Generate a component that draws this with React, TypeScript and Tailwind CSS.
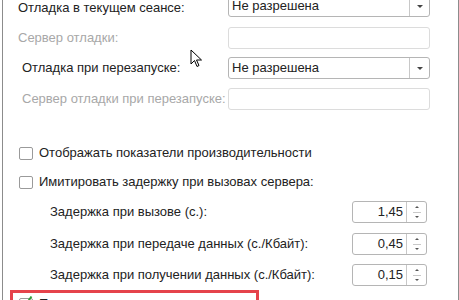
import React from "react";

const FONT = { fontFamily: '"Liberation Sans", Arial, sans-serif' };

function Combo({ value }: { value: string }) {
  return (
    <div className="flex h-[22px] w-[202px] rounded-[3px] border border-[#b5b5b5] bg-white">
      <div className="flex flex-1 items-center pl-[3px] text-[13px] text-[#222]">{value}</div>
      <div className="flex w-[20px] items-center justify-center border-l border-[#c8c8c8]">
        <div className="h-0 w-0 border-x-[3px] border-t-[3px] border-x-transparent border-t-[#444]" />
      </div>
    </div>
  );
}

function Field() {
  return <div className="h-[22px] w-[202px] rounded-[3px] border border-[#dcdcdc] bg-white" />;
}

function Spinner({ value }: { value: string }) {
  return (
    <div className="flex h-[22px] w-[75px] rounded-[3px] border border-[#b5b5b5] bg-white">
      <div className="flex flex-1 items-center justify-end pr-[3px] text-[13px] text-[#222]">{value}</div>
      <div className="flex w-[20px] flex-col items-center justify-center border-l border-[#c8c8c8]">
        <div className="flex flex-1 items-center">
          <div className="h-0 w-0 border-x-[2px] border-b-[2px] border-x-transparent border-b-[#555]" />
        </div>
        <div className="h-px w-[8px] bg-[#c8c8c8]" />
        <div className="flex flex-1 items-center">
          <div className="h-0 w-0 border-x-[2px] border-t-[2px] border-x-transparent border-t-[#555]" />
        </div>
      </div>
    </div>
  );
}

function Check({ checked }: { checked?: boolean }) {
  return (
    <div className="relative h-[13px] w-[14px] rounded-[2px] border border-[#9a9a9a] bg-white">
      {checked && (
        <svg className="absolute -top-[4px] left-[1px]" width="12" height="12" viewBox="0 0 12 12">
          <path d="M1.5 7 L4.5 10 L10.5 1.5" fill="none" stroke="#2f9e3a" strokeWidth="2" />
        </svg>
      )}
    </div>
  );
}

export default function App() {
  return (
    <div className="relative h-[300px] w-[459px] overflow-hidden bg-white" style={FONT}>
      <div className="ml-[2px] flex h-[300px] w-[457px] flex-col border-x border-[#8c8c8c]">
        <div className="-mt-[5px] flex h-[22px] items-center">
          <span className="ml-[15px] mt-[3px] w-[210px] text-[13px] leading-[14px] text-[#222]">Отладка в текущем сеансе:</span>
          <Combo value="Не разрешена" />
        </div>
        <div className="mt-[10px] flex h-[22px] items-center">
          <span className="ml-[15px] w-[210px] text-[13px] text-[#a8a8a8]">Сервер отладки:</span>
          <Field />
        </div>
        <div className="mt-[8px] flex h-[22px] items-center">
          <span className="ml-[19px] w-[206px] text-[13px] text-[#222]">Отладка при перезапуске:</span>
          <Combo value="Не разрешена" />
        </div>
        <div className="mt-[9px] flex h-[22px] items-center">
          <span className="ml-[19px] w-[206px] text-[13px] text-[#a8a8a8]">Сервер отладки при перезапуске:</span>
          <Field />
        </div>

        <div className="mt-[35px] flex h-[16px] items-center">
          <div className="ml-[16px]"><Check /></div>
          <span className="ml-[6px] text-[13px] text-[#222]">Отображать показатели производительности</span>
        </div>
        <div className="mt-[13px] flex h-[16px] items-center">
          <div className="ml-[16px]"><Check /></div>
          <span className="ml-[6px] text-[13px] text-[#222]">Имитировать задержку при вызовах сервера:</span>
        </div>

        <div className="mt-[11px] flex h-[22px] items-center">
          <span className="ml-[47px] w-[302px] text-[13px] text-[#222]">Задержка при вызове (с.):</span>
          <Spinner value="1,45" />
        </div>
        <div className="mt-[10px] flex h-[22px] items-center">
          <span className="ml-[47px] w-[302px] text-[13px] text-[#222]">Задержка при передаче данных (с./Кбайт):</span>
          <Spinner value="0,45" />
        </div>
        <div className="mt-[9px] flex h-[22px] items-center">
          <span className="ml-[47px] w-[302px] text-[13px] text-[#222]">Задержка при получении данных (с./Кбайт):</span>
          <Spinner value="0,15" />
        </div>

        <div className="ml-[7px] mt-[4px] w-[249px] border-[3px] border-[#e5434b] px-[6px] pt-[2px]">
          <div className="flex h-[18px] items-center">
            <Check checked />
            <span className="ml-[6px] text-[13px] text-[#222]">Показывать</span>
          </div>
        </div>
      </div>

      <svg className="absolute left-[190px] top-[49px]" width="14" height="20" viewBox="0 0 14 20">
        <path d="M1 1 L1 15 L4.5 11.5 L7 17.5 L9 16.5 L6.5 11 L11.5 11 Z" fill="#fff" stroke="#000" strokeWidth="1" strokeLinejoin="round" />
      </svg>
    </div>
  );
}
